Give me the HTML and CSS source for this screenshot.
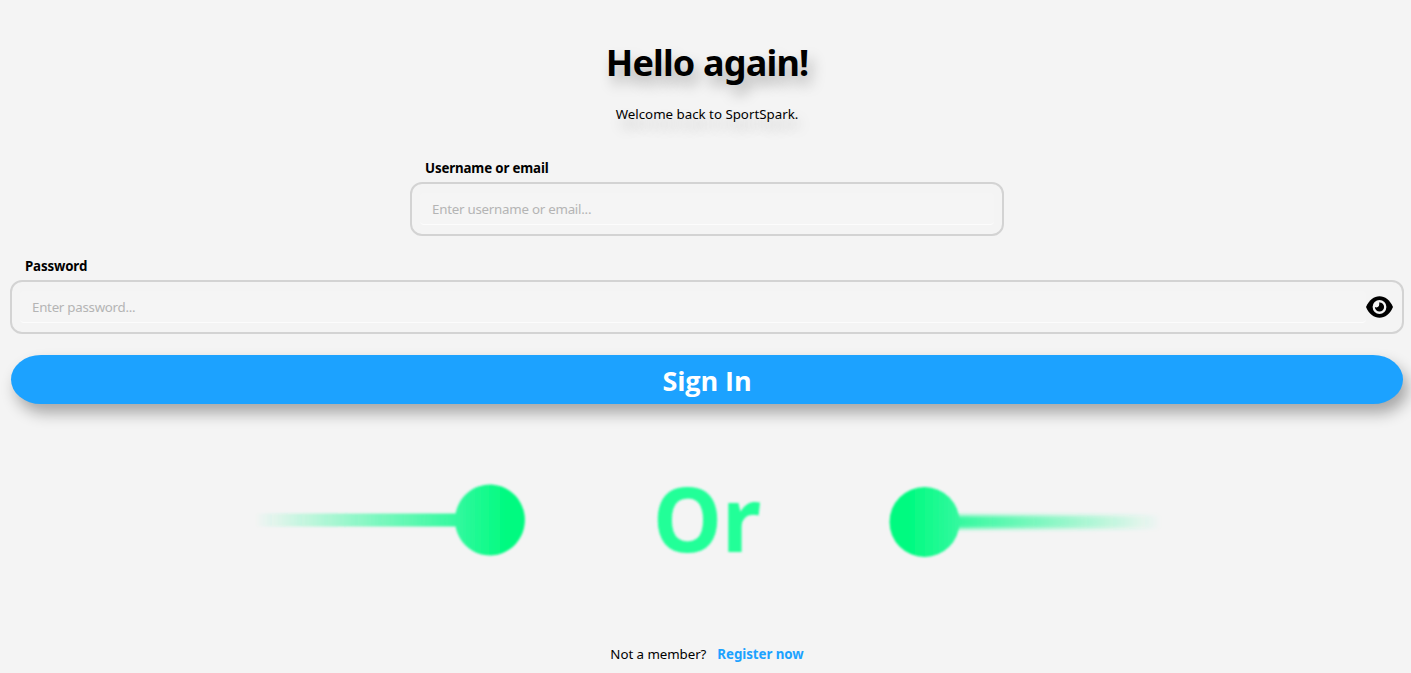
FILE: index.html
```html
<!DOCTYPE html>
<html lang="en">
<head>
<meta charset="utf-8">
<title>SportSpark</title>
<link rel="stylesheet" href="styles.css">
</head>
<body>
<main class="login">
  <h1 class="title">Hello again!</h1>
  <p class="subtitle">Welcome back to SportSpark.</p>
  <form class="form">
    <div class="field field-user">
      <label class="label" for="user">Username or email</label>
      <div class="box"><input class="input" id="user" type="text" placeholder="Enter username or email..."></div>
    </div>
    <div class="field">
      <label class="label" for="pass">Password</label>
      <div class="box box-pass">
        <input class="input input-pass" id="pass" type="password" placeholder="Enter password...">
        <svg class="eye" viewBox="0 0 27 22">
          <path d="M0 11C3 4 8 .2 13.500 .2S24 4 27 11C24 18 19 21.800 13.500 21.800S3 18 0 11Z"/>
          <circle cx="13.500" cy="11" r="6.900" fill="#f4f4f4"/>
          <path d="M13.500 6.400A4.600 4.600 0 1 1 8.900 11A2.800 2.800 0 0 0 13.200 8.500 3 3 0 0 0 13 6.400Z"/>
        </svg>
      </div>
    </div>
    <button class="submit" type="button"><span class="submit-text">Sign In</span></button>
  </form>
  <svg class="divider" viewBox="0 -20 920 140">
    <defs>
      <linearGradient id="left" gradientUnits="userSpaceOnUse" x1="8" y1="0" x2="278" y2="0">
        <stop offset="0" stop-color="#2bfb9b" stop-opacity="0"/>
        <stop offset=".75" stop-color="#32f99e"/>
        <stop offset=".93" stop-color="#00fa80"/>
      </linearGradient>
      <linearGradient id="right" gradientUnits="userSpaceOnUse" x1="914" y1="0" x2="642" y2="0">
        <stop offset="0" stop-color="#2bfb9b" stop-opacity="0"/>
        <stop offset=".75" stop-color="#32f99e"/>
        <stop offset=".93" stop-color="#00fa80"/>
      </linearGradient>
      <filter id="soft"><feGaussianBlur stdDeviation="1.300"/></filter>
      <filter id="softer" x="-5%" y="-50%" width="110%" height="200%"><feGaussianBlur stdDeviation="2.200"/></filter>
    </defs>
    <path d="M8 43.500H208.500A35 35.500 0 1 1 208.500 56.500H8Z" fill="url(#left)" filter="url(#soft)"/>
    <path d="M914 45.500H704V58.500H914Z" fill="url(#right)" filter="url(#softer)"/>
    <circle cx="677.500" cy="52" r="35" fill="url(#right)" filter="url(#soft)"/>
    <text class="or" x="406" y="82" textLength="108" lengthAdjust="spacingAndGlyphs" filter="url(#soft)">Or</text>
  </svg>
  <p class="footer"><span class="question">Not a member?</span><a class="register">Register now</a></p>
</main>
</body>
</html>
```
FILE: styles.css
```css
* { box-sizing: border-box; }
body {
  margin: 0;
  background: #f4f4f4;
  color: #000;
  font: 13.3px/20px "Segoe UI", "Noto Sans", sans-serif;
  overflow: hidden;
}
.login { display: flex; flex-direction: column; align-items: center; height: 673px; padding: 36px 7px 0 10px; }
.title { margin: 0; font-size: 36px; line-height: 53px; letter-spacing: -.83px; text-shadow: 5px 9px 14px rgba(0,0,0,.28); }
.subtitle { margin: 15px 0 0; text-shadow: 5px 9px 14px rgba(0,0,0,.28); }
.form { display: flex; flex-direction: column; align-items: center; width: 100%; margin-top: 34px; }
.field { display: flex; flex-direction: column; width: 100%; margin-bottom: 20px; }
.field-user { width: 594px; }
.field + .field { margin-bottom: 21px; }
.label { height: 24px; padding-left: 15px; font-weight: 700; letter-spacing: -.15px; }
.box { display: flex; align-items: center; height: 54px; padding: 0 8px; border: 2px solid #d3d3d3; border-radius: 12px; }
.box-pass { padding-right: 9px; }
.input { flex: 1; min-width: 0; height: 32px; padding: 1px 12px 0; border: 0; border-bottom: 1px solid #fcfcfc; border-radius: 4px; background: #f5f5f5; font: inherit; letter-spacing: -.24px; }
.input::placeholder { color: #b4b4b4; opacity: 1; }
.input-pass { letter-spacing: -.26px; }
.eye { width: 27px; height: 22px; }
.submit { display: block; width: calc(100% - 2px); height: 49px; padding: 0; border: 0; border-radius: 30px / 24.5px; background: #1ca2ff; box-shadow: 5px 9px 15px rgba(0,0,0,.32); color: #fff; font: 700 27px/49px "Segoe UI", "Open Sans", sans-serif; }
.submit-text { position: relative; top: 1px; letter-spacing: -.1px; }
.divider { width: 920px; height: 140px; margin-top: 46px; flex: none; }
.or { font: 700 89px "Noto Sans", sans-serif; fill: #20ff98; }
.footer { display: flex; gap: 11px; margin: 54px 0 0; }
.question { letter-spacing: -.05px; }
.register { color: #1ca2ff; font-weight: 700; letter-spacing: -.05px; }
```
